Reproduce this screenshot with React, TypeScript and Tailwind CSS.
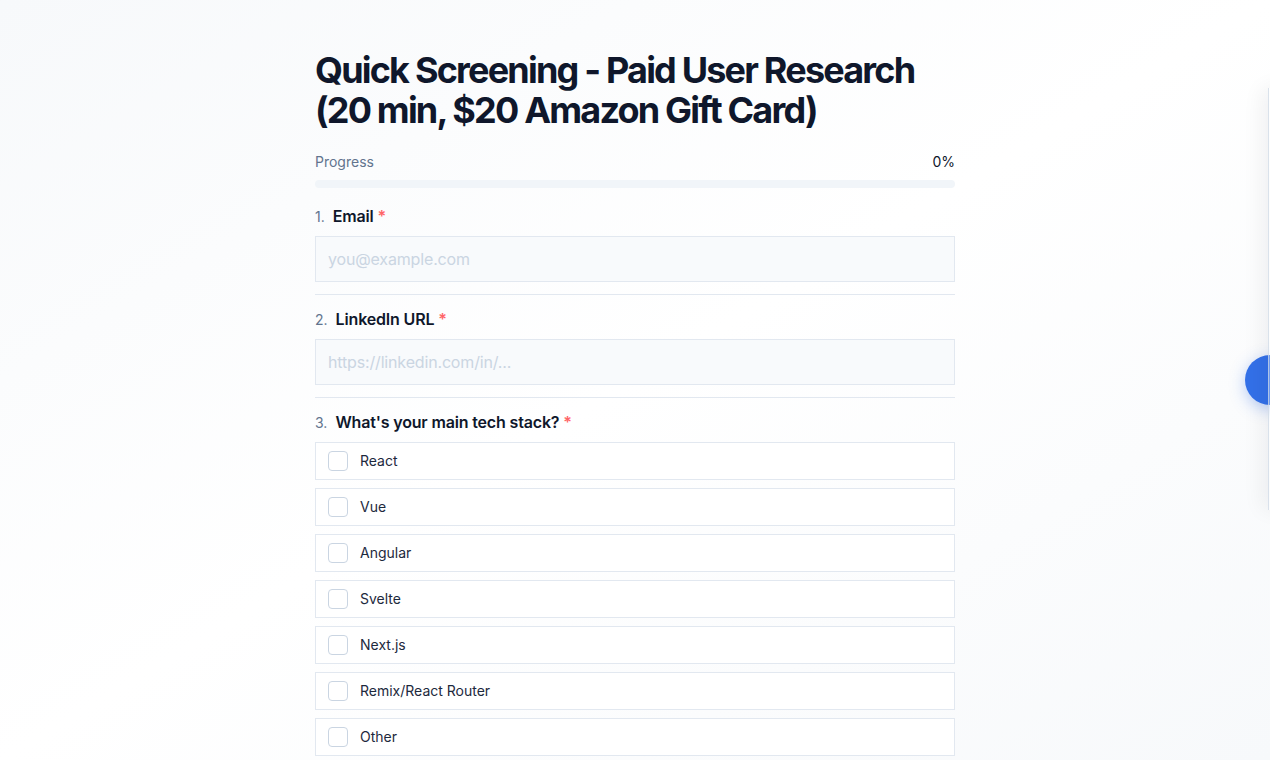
import { useState } from "react";

const stacks = ["React", "Vue", "Angular", "Svelte", "Next.js", "Remix/React Router", "Other"];

function QuestionLabel({ n, text }: { n: number; text: string }) {
  return (
    <div className="flex items-baseline gap-2 leading-6">
      <span className="text-sm text-slate-500">{n}.</span>
      <span className="text-base font-semibold tracking-[-0.01em] text-slate-900">
        {text} <span className="text-red-400">*</span>
      </span>
    </div>
  );
}

export default function App() {
  const [email, setEmail] = useState("");
  const [linkedin, setLinkedin] = useState("");
  const [picked, setPicked] = useState<string[]>([]);

  function toggle(s: string) {
    setPicked((p) => (p.includes(s) ? p.filter((x) => x !== s) : [...p, s]));
  }

  return (
    <div
      className="relative h-[760px] overflow-hidden bg-gradient-to-br from-[#f7f9fb] via-white to-[#f7f9fb]"
      style={{ fontFamily: "Inter, 'Noto Sans', sans-serif" }}
    >
      <div className="mx-auto w-[640px] pt-[50px]">
        <h1 className="text-[36px] font-bold leading-10 tracking-[-0.05em] text-slate-900">
          Quick Screening - Paid User Research (20 min, $20 Amazon Gift Card)
        </h1>

        <div className="mt-[22px] flex items-center justify-between text-sm leading-5">
          <span className="text-slate-500">Progress</span>
          <span className="text-slate-900">0%</span>
        </div>
        <div className="mt-2 h-2 rounded-full bg-slate-100" />

        <div className="mt-4 border-b border-slate-200 pb-3">
          <QuestionLabel n={1} text="Email" />
          <input
            value={email}
            onChange={(e) => setEmail(e.target.value)}
            placeholder="you@example.com"
            className="mt-2 h-[46px] w-full border border-slate-200 bg-slate-50 px-3 text-base tracking-[-0.01em] text-slate-900 outline-none placeholder:text-slate-300"
          />
        </div>

        <div className="border-b border-slate-200 pb-3 pt-3">
          <QuestionLabel n={2} text="LinkedIn URL" />
          <input
            value={linkedin}
            onChange={(e) => setLinkedin(e.target.value)}
            placeholder="https://linkedin.com/in/..."
            className="mt-2 h-[46px] w-full border border-slate-200 bg-slate-50 px-3 text-base tracking-[-0.01em] text-slate-900 outline-none placeholder:text-slate-300"
          />
        </div>

        <div className="pt-3">
          <QuestionLabel n={3} text="What's your main tech stack?" />
          <div className="mt-2 flex flex-col gap-2">
            {stacks.map((s) => (
              <label
                key={s}
                className="flex cursor-pointer items-center gap-3 border border-slate-200 bg-white px-3 py-2"
              >
                <input
                  type="checkbox"
                  checked={picked.includes(s)}
                  onChange={() => toggle(s)}
                  className="h-5 w-5 appearance-none rounded border-[1.5px] border-slate-300 bg-white checked:border-blue-600 checked:bg-blue-600"
                />
                <span className="text-sm text-slate-800">{s}</span>
              </label>
            ))}
          </div>
        </div>
      </div>

      {/* floating button and side drawer edge */}
      <div className="absolute left-[1245px] top-[355px] h-[50px] w-[50px] rounded-full bg-[#3370e8] shadow-[0_4px_16px_rgba(51,112,232,0.35)]" />
      <div className="absolute left-[1268px] top-[88px] h-[422px] w-[300px] border-l border-slate-300/70 bg-white/30 shadow-[-6px_0_20px_rgba(15,23,42,0.06)]" />
    </div>
  );
}
